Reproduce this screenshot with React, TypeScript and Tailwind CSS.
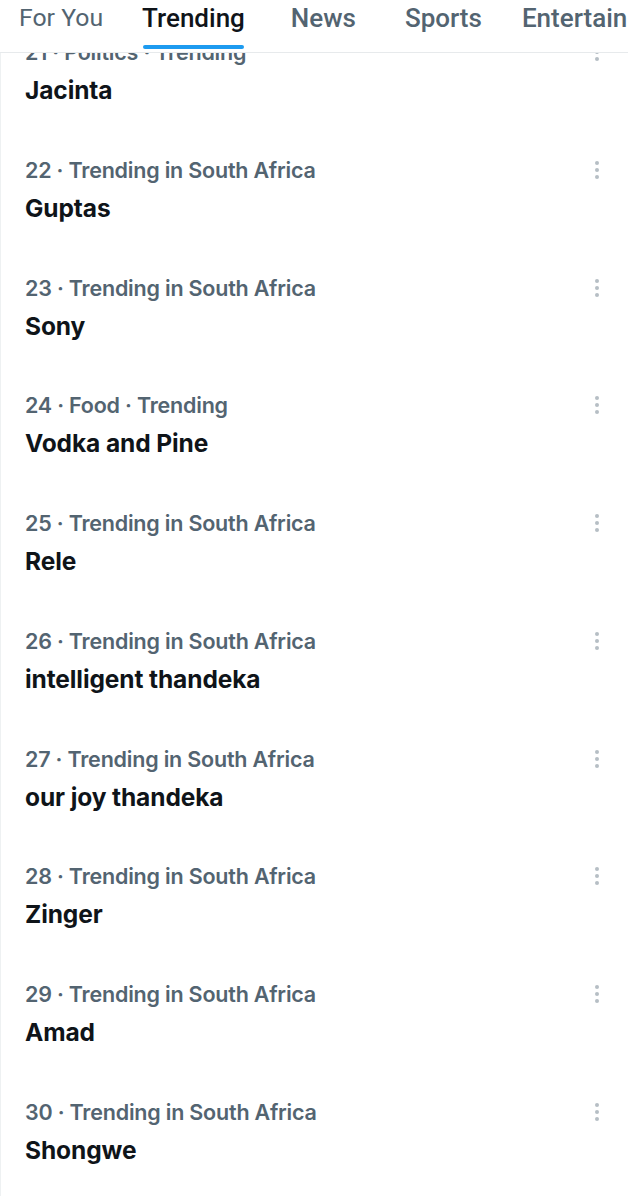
const tabs = [
  { label: "For You", className: "ml-[19px] text-[24.8px] text-[#536471] font-normal" },
  { label: "Trending", className: "ml-[39px] text-[#0f1419] font-medium", active: true },
  { label: "News", className: "ml-[46px] text-[#536471] font-medium" },
  { label: "Sports", className: "ml-[49px] text-[#536471] font-medium" },
  { label: "Entertainment", className: "ml-[40px] text-[#536471] font-medium" },
];

const trends = [
  { rank: 21, context: "Politics · Trending", name: "Jacinta" },
  { rank: 22, context: "Trending in South Africa", name: "Guptas" },
  { rank: 23, context: "Trending in South Africa", name: "Sony" },
  { rank: 24, context: "Food · Trending", name: "Vodka and Pine" },
  { rank: 25, context: "Trending in South Africa", name: "Rele" },
  { rank: 26, context: "Trending in South Africa", name: "intelligent thandeka" },
  { rank: 27, context: "Trending in South Africa", name: "our joy thandeka" },
  { rank: 28, context: "Trending in South Africa", name: "Zinger" },
  { rank: 29, context: "Trending in South Africa", name: "Amad" },
  { rank: 30, context: "Trending in South Africa", name: "Shongwe" },
];

const MoreIcon = () => (
  <svg width="8" height="20" viewBox="0 0 8 20" className="fill-[#b6bec5]">
    <circle cx="4" cy="3" r="2" />
    <circle cx="4" cy="10" r="2" />
    <circle cx="4" cy="17" r="2" />
  </svg>
);

const TrendRow = ({ rank, context, name }: { rank: number; context: string; name: string }) => (
  <div className="h-[117.75px] flex justify-between pl-[24px] pr-[27px] pt-[20px]">
    <div className="flex flex-col">
      <p className="text-[21.5px] leading-[28px] font-semibold text-[#536471] tracking-[-0.2px]">
        {rank} · {context}
      </p>
      <p className="mt-[8px] text-[24.5px] leading-[32px] font-bold text-[#0f1419] tracking-[-0.1px]">
        {name}
      </p>
    </div>
    <div className="pt-[4px]">
      <MoreIcon />
    </div>
  </div>
);

export default function App() {
  return (
    <div className="w-[628px] h-[1200px] bg-white overflow-hidden font-['Inter',sans-serif]">
      <header className="h-[53px] border-b border-[#e7eaec] flex items-start whitespace-nowrap overflow-hidden font-['Roboto',sans-serif] text-[26px]">
        {tabs.map((t) => (
          <div key={t.label} className={`relative shrink-0 h-[52px] flex flex-col items-center ${t.className}`}>
            <span className="leading-[36px]">{t.label}</span>
            {t.active && (
              <span className="mt-[9px] h-[4px] w-[101px] rounded-full bg-[#1d9bf0]" />
            )}
          </div>
        ))}
      </header>
      <div className="h-[1143px] overflow-hidden border-l border-[#eef1f2]">
        <div className="-mt-[35px] border-b border-[#e3e6e8]">
          {trends.map((t) => (
            <TrendRow key={t.rank} {...t} />
          ))}
        </div>
      </div>
    </div>
  );
}
